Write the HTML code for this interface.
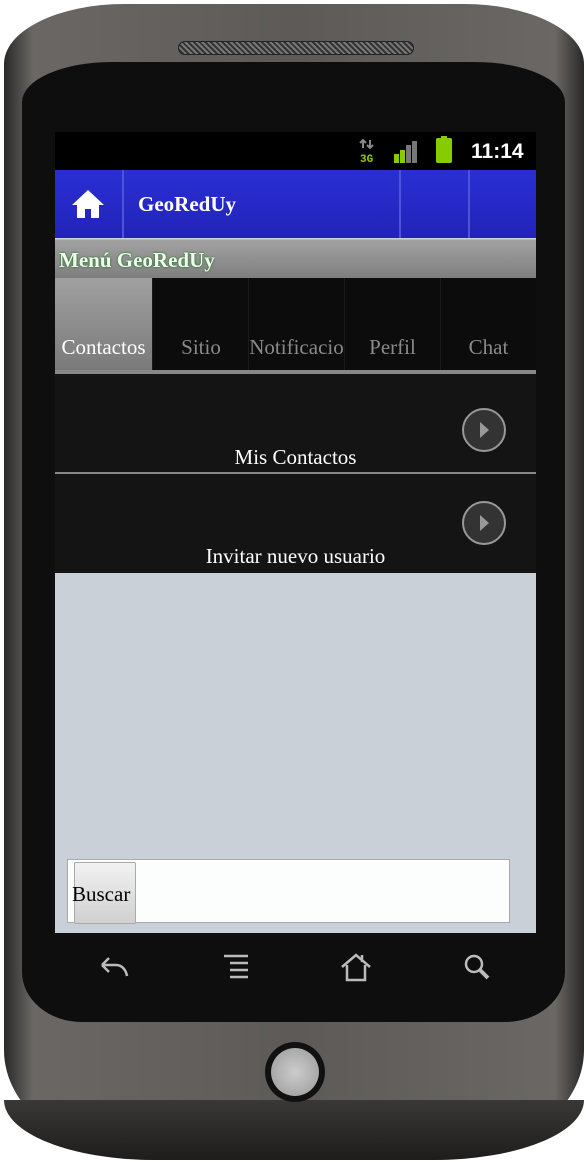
<!DOCTYPE html>
<html><head><meta charset="utf-8"><style>
*{margin:0;padding:0;box-sizing:border-box}
body{width:586px;height:1162px;background:#fff;position:relative;overflow:hidden;font-family:"Liberation Serif",serif}
.body{position:absolute;left:4px;top:4px;width:580px;height:1156px;border-radius:120px 120px 150px 150px/60px 60px 110px 110px;background:linear-gradient(90deg,#2a2928 0%,#6a6764 5%,#5d5a57 50%,#6a6764 95%,#2a2928 100%)}
.lower{position:absolute;left:4px;top:1100px;width:580px;height:60px;border-radius:0 0 150px 150px/0 0 60px 60px;background:linear-gradient(180deg,#3a3836,#1e1d1c)}
.bezel{position:absolute;left:22px;top:62px;width:543px;height:960px;background:#0e0e0e;border-radius:90px 90px 60px 60px/40px 40px 50px 50px}
.speaker{position:absolute;left:178px;top:41px;width:236px;height:14px;border-radius:7px;background:repeating-linear-gradient(45deg,#777 0 2px,#333 2px 4px);border:1px solid #222}
.screen{position:absolute;left:55px;top:132px;width:481px;height:801px;background:#c9d0d8;overflow:hidden}
.status{height:38px;background:#000;position:relative}
.hdr{position:absolute;top:38px;left:0;width:481px;height:68px;background:linear-gradient(#2a2fd4,#2223b8)}
.menu{position:absolute;top:107px;left:0;width:481px;height:39px;background:linear-gradient(#a2a2a2,#7e7e7e);border-top:1px solid #bbb}
.tabs{position:absolute;top:146px;left:0;width:481px;height:92px;background:#0c0c0c}
.tab{position:absolute;top:0;height:92px;width:97px;text-align:center;color:#8a8a8a;font-size:21px;padding-top:57px;border-left:1px solid #1a1a1a;white-space:nowrap;overflow:hidden}
.item{position:absolute;left:0;width:481px;height:98px;background:#141414;color:#fff;font-size:21px;text-align:center}
.arr{position:absolute;right:30px;width:44px;height:44px;border-radius:50%;border:2px solid #999;background:#333}
.arr:after{content:"";position:absolute;left:16px;top:12px;border-left:9px solid #999;border-top:8px solid transparent;border-bottom:8px solid transparent}
.search{position:absolute;left:12px;top:727px;width:443px;height:64px;background:#fcfdfd;border:1px solid #aaa}
.btn{position:absolute;left:6px;top:2px;width:62px;height:62px;background:linear-gradient(#f2f2f2,#d0d0d0);border:1px solid #aaa;border-radius:2px;font-size:21px;line-height:62px;text-indent:-3px;color:#000;white-space:nowrap}
.nav{position:absolute;top:953px;stroke:#bbb;fill:none;stroke-width:2.5}
.hb{position:absolute;left:265px;top:1042px;width:60px;height:60px;border-radius:50%;background:#111;}
.hb:after{content:"";position:absolute;left:6px;top:6px;width:48px;height:48px;border-radius:50%;background:radial-gradient(#ccc,#999)}
</style></head><body>
<div class="body"></div>
<div class="lower"></div>
<div class="bezel"></div>
<div class="speaker"></div>
<div class="screen">
 <div class="status">
  <svg style="position:absolute;left:304px;top:6px" width="20" height="26"><path d="M4 10V2M1 5l3-3 3 3M11 2v8M8 7l3 3 3-3" stroke="#888" stroke-width="2" fill="none"/><text x="1" y="24" fill="#9c0" font-size="11" font-family="Liberation Mono" font-weight="bold">3G</text></svg>
  <svg style="position:absolute;left:338px;top:8px" width="26" height="24"><rect x="1" y="14" width="5" height="9" fill="#8c0"/><rect x="7" y="10" width="5" height="13" fill="#8c0"/><rect x="13" y="5" width="5" height="18" fill="#777"/><rect x="19" y="1" width="5" height="22" fill="#777"/></svg>
  <div style="position:absolute;left:381px;top:6px;width:16px;height:25px;background:#8c0;border-radius:2px"></div>
  <div style="position:absolute;left:386px;top:4px;width:6px;height:3px;background:#8c0"></div>
  <div style="position:absolute;left:416px;top:8px;color:#fff;font:bold 21px 'Liberation Sans',sans-serif">11:14</div>
 </div>
 <div class="hdr">
  <svg style="position:absolute;left:15px;top:18px" width="36" height="32"><path d="M18 2L2 17h5v13h8v-9h6v9h8V17h5z" fill="#fff"/></svg>
  <div style="position:absolute;left:67px;top:0;height:68px;border-left:2px solid #4a55d8"></div>
  <div style="position:absolute;left:344px;top:0;height:68px;border-left:2px solid #4a55d8"></div>
  <div style="position:absolute;left:413px;top:0;height:68px;border-left:2px solid #4a55d8"></div>
  <div style="position:absolute;left:83px;top:22px;color:#fff;font-weight:bold;font-size:21px">GeoRedUy</div>
 </div>
 <div class="menu"><div style="position:absolute;left:4px;top:8px;color:#efe;font-weight:bold;font-size:21px;text-shadow:0 0 2px #060">Menú GeoRedUy</div></div>
 <div class="tabs">
  <div class="tab" style="left:0;background:linear-gradient(#a0a0a0,#7a7a7a);color:#fff;border:none">Contactos</div>
  <div class="tab" style="left:97px">Sitio</div>
  <div class="tab" style="left:193px;width:96px">Notificacio</div>
  <div class="tab" style="left:289px;width:96px">Perfil</div>
  <div class="tab" style="left:385px;width:96px">Chat</div>
 </div>
 <div style="position:absolute;top:238px;left:0;width:481px;height:4px;background:#888"></div>
 <div class="item" style="top:242px"><div class="arr" style="top:34px"></div><div style="position:absolute;top:71px;width:100%">Mis Contactos</div></div>
 <div style="position:absolute;top:340px;left:0;width:481px;height:2px;background:#888"></div>
 <div class="item" style="top:342px;height:99px"><div class="arr" style="top:27px"></div><div style="position:absolute;top:70px;width:100%">Invitar nuevo usuario</div></div>
 <div class="search"><div class="btn">Buscar</div></div>
</div>
<svg class="nav" style="left:98px" width="34" height="30"><path d="M4 12h14c6 0 10 5 11 11M4 12l7-7M4 12l7 7"/></svg>
<svg class="nav" style="left:222px" width="30" height="30"><path d="M2 3h24M8 10h18M8 17h18M8 24h18"/></svg>
<svg class="nav" style="left:340px" width="32" height="30"><path d="M2 14L16 2l14 12M7 12v15h18V12M22 2v7"/></svg>
<svg class="nav" style="left:462px" width="32" height="30"><circle cx="12" cy="11" r="8"/><path d="M18 17l8 8" stroke-width="4"/></svg>
<div class="hb"></div>
</body></html>
